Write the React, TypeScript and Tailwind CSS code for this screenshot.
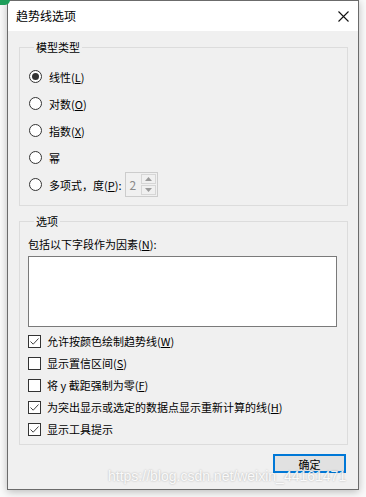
import React from 'react';

const font = "font-['Noto_Sans_CJK_SC','Noto_Sans',sans-serif]";

const Radio = ({ checked }: { checked?: boolean }) => (
  <span className="flex h-[13px] w-[13px] shrink-0 items-center justify-center rounded-full border border-[#333] bg-white">
    {checked && <span className="h-[7px] w-[7px] rounded-full bg-[#333]" />}
  </span>
);

const Check = ({ checked }: { checked?: boolean }) => (
  <span className="flex h-[13px] w-[13px] shrink-0 items-center justify-center border border-[#333] bg-white">
    {checked && (
      <svg width="11" height="11" viewBox="0 0 11 11">
        <path d="M1.5 5.5 L4.2 8.2 L9.5 2.5" fill="none" stroke="#444" strokeWidth="1" />
      </svg>
    )}
  </span>
);

const Group = ({ title, children, className = '' }: { title: string; children: React.ReactNode; className?: string }) => (
  <fieldset className={`border border-[#dcdcdc] ${className}`}>
    <legend className="ml-[6px] px-[2px] text-[11px] leading-[14px]">{title}</legend>
    {children}
  </fieldset>
);

const radios: { label: React.ReactNode; checked?: boolean }[] = [
  { label: <>线性(<u>L</u>)</>, checked: true },
  { label: <>对数(<u>O</u>)</> },
  { label: <>指数(<u>X</u>)</> },
  { label: <>幂</> },
];

const checks: { label: React.ReactNode; checked?: boolean }[] = [
  { label: <>允许按颜色绘制趋势线(<u>W</u>)</>, checked: true },
  { label: <>显示置信区间(<u>S</u>)</> },
  { label: <>将 y 截距强制为零(<u>F</u>)</> },
  { label: <>为突出显示或选定的数据点显示重新计算的线(<u>H</u>)</>, checked: true },
  { label: <>显示工具提示</>, checked: true },
];

export default function App() {
  return (
    <div className={`relative h-[497px] w-[366px] overflow-hidden bg-[#fafafa] text-black ${font}`}>
      <div className="absolute left-0 top-0 h-[5px] w-[10px] rounded-br-full bg-[#1e9e5a]" />
      <div className="ml-[7px] flex h-[490px] w-[352px] flex-col border border-[#6b6b6b] bg-[#f0f0f0] shadow-[0_2px_8px_rgba(0,0,0,0.25)]">
        <div className="flex h-[30px] shrink-0 items-center justify-between bg-white pl-[8px] pr-[9px]">
          <span className="text-[12px] leading-[16px]">趋势线选项</span>
          <svg width="11" height="11" viewBox="0 0 11 11">
            <path d="M0.5 0.5 L10.5 10.5 M10.5 0.5 L0.5 10.5" stroke="#111" strokeWidth="1.1" />
          </svg>
        </div>

        <div className="flex flex-col pl-[11px] pr-[10px] pt-[9px]">
          <Group title="模型类型" className="pb-[7px] pl-[8px] pt-[9px]">
            {radios.map((r, i) => (
              <div key={i} className="flex h-[27px] items-center gap-[7px] pl-[1px] text-[11px] leading-[14px]">
                <Radio checked={r.checked} />
                <span>{r.label}</span>
              </div>
            ))}
            <div className="flex h-[27px] items-center gap-[7px] pl-[1px] text-[11px] leading-[14px]">
              <Radio />
              <span>多项式，度(<u>P</u>):</span>
              <div className="ml-[-3px] flex h-[25px] w-[33px] items-center border border-[#cccccc] bg-[#f0f0f0]">
                <span className="flex-1 pl-[3px] text-[12px] text-[#8a8a8a]">2</span>
                <div className="mr-[1px] flex h-[21px] w-[15px] flex-col gap-[1px]">
                  <div className="flex flex-1 items-center justify-center border border-[#d6d6d6]">
                    <svg width="7" height="4" viewBox="0 0 7 4"><path d="M0 4 L3.5 0 L7 4 Z" fill="#9a9a9a" /></svg>
                  </div>
                  <div className="flex flex-1 items-center justify-center border border-[#d6d6d6]">
                    <svg width="7" height="4" viewBox="0 0 7 4"><path d="M0 0 L3.5 4 L7 0 Z" fill="#9a9a9a" /></svg>
                  </div>
                </div>
              </div>
            </div>
          </Group>

          <Group title="选项" className="mt-[8px] pb-[4px] pl-[8px] pr-[9px] pt-[9px]">
            <div className="text-[11px] leading-[14px]">包括以下字段作为因素(<u>N</u>):</div>
            <div className="mt-[5px] h-[71px] w-[309px] border border-[#7a7a7a] bg-white" />
            <div className="mt-[3px] flex flex-col">
              {checks.map((c, i) => (
                <div key={i} className="flex h-[22px] items-center gap-[6px] text-[11px] leading-[14px]">
                  <Check checked={c.checked} />
                  <span>{c.label}</span>
                </div>
              ))}
            </div>
          </Group>

          <div className="mt-[9px] flex justify-end pr-[2px]">
            <button className="flex h-[19px] w-[73px] items-center justify-center border-2 border-[#0078d7] bg-[#e1e1e1] text-[11px] leading-[14px]">
              确定
            </button>
          </div>
        </div>
      </div>

      <div className="pointer-events-none absolute left-[108px] top-[468px] font-['Liberation_Sans',sans-serif] text-[14px] leading-[16px] text-white/90 [text-shadow:0_0_2px_rgba(0,0,0,0.3)]">
        https://blog.csdn.net/weixin_44161471
      </div>
    </div>
  );
}
